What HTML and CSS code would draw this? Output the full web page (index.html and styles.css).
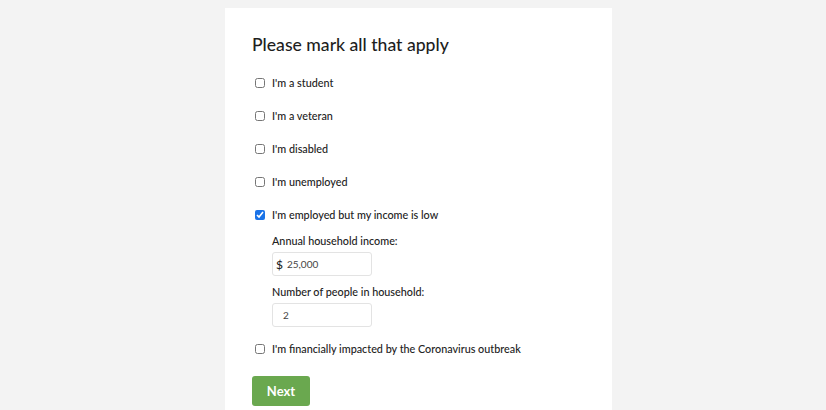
FILE: index.html
```html
<!DOCTYPE html>
<html>
<head>
<meta charset="utf-8">
<link rel="stylesheet" href="styles.css">
</head>
<body>
<div class="card">
  <h1 class="title">Please mark all that apply</h1>
  <div class="options">
    <label class="option"><input type="checkbox" class="check"><span>I'm a student</span></label>
    <label class="option"><input type="checkbox" class="check"><span>I'm a veteran</span></label>
    <label class="option"><input type="checkbox" class="check"><span>I'm disabled</span></label>
    <label class="option"><input type="checkbox" class="check"><span>I'm unemployed</span></label>
    <label class="option"><input type="checkbox" class="check" checked><span>I'm employed but my income is low</span></label>
    <div class="details">
      <div class="field-label">Annual household income:</div>
      <div class="input-box"><span class="currency">$</span><span class="value">25,000</span></div>
      <div class="field-label second">Number of people in household:</div>
      <div class="input-box"><span class="value pad">2</span></div>
    </div>
    <label class="option last"><input type="checkbox" class="check"><span>I'm financially impacted by the Coronavirus outbreak</span></label>
  </div>
  <button class="next">Next</button>
</div>
</body>
</html>
```
FILE: styles.css
```css
html, body {
  margin: 0;
  padding: 0;
  background: #f3f3f3;
  font-family: Lato, "Open Sans", sans-serif;
  color: #222;
}
.card {
  background: #fff;
  width: 360px;
  margin: 8px 0 0 225px;
  padding: 26px 0 20px 27px;
  min-height: 376px;
  box-sizing: content-box;
}
.title {
  font-size: 17.6px;
  font-weight: 500;
  margin: 0 0 10px 0;
  line-height: 22px;
  color: #1e1e1e;
}
.options {
  display: flex;
  flex-direction: column;
}
.option {
  display: flex;
  align-items: center;
  height: 33px;
  font-size: 10.8px;
  font-weight: 500;
  color: #222;
}
.check {
  width: 10px;
  height: 10px;
  margin: 0 7px 0 3px;
  accent-color: #1a73e8;
}
.details {
  padding-left: 20px;
  padding-top: 3px;
  padding-bottom: 5px;
}
.field-label {
  font-size: 10.8px;
  font-weight: 500;
  line-height: 14px;
  margin-bottom: 4px;
}
.field-label.second {
  margin-top: 9px;
  margin-bottom: 4px;
}
.input-box {
  width: 95px;
  height: 22px;
  border: 1px solid #e3e3e3;
  border-radius: 3px;
  display: flex;
  align-items: center;
  padding-left: 3px;
  font-size: 10px;
}
.currency {
  font-size: 12px;
  font-weight: 500;
  margin-right: 4px;
  color: #222;
}
.value {
  color: #444;
}
.value.pad {
  padding-left: 7px;
}
.next {
  margin-top: 11px;
  width: 58px;
  height: 30px;
  background: #6aa84f;
  border: none;
  border-radius: 3px;
  color: #fff;
  font-family: Lato, sans-serif;
  font-weight: 700;
  font-size: 13px;
}
```
